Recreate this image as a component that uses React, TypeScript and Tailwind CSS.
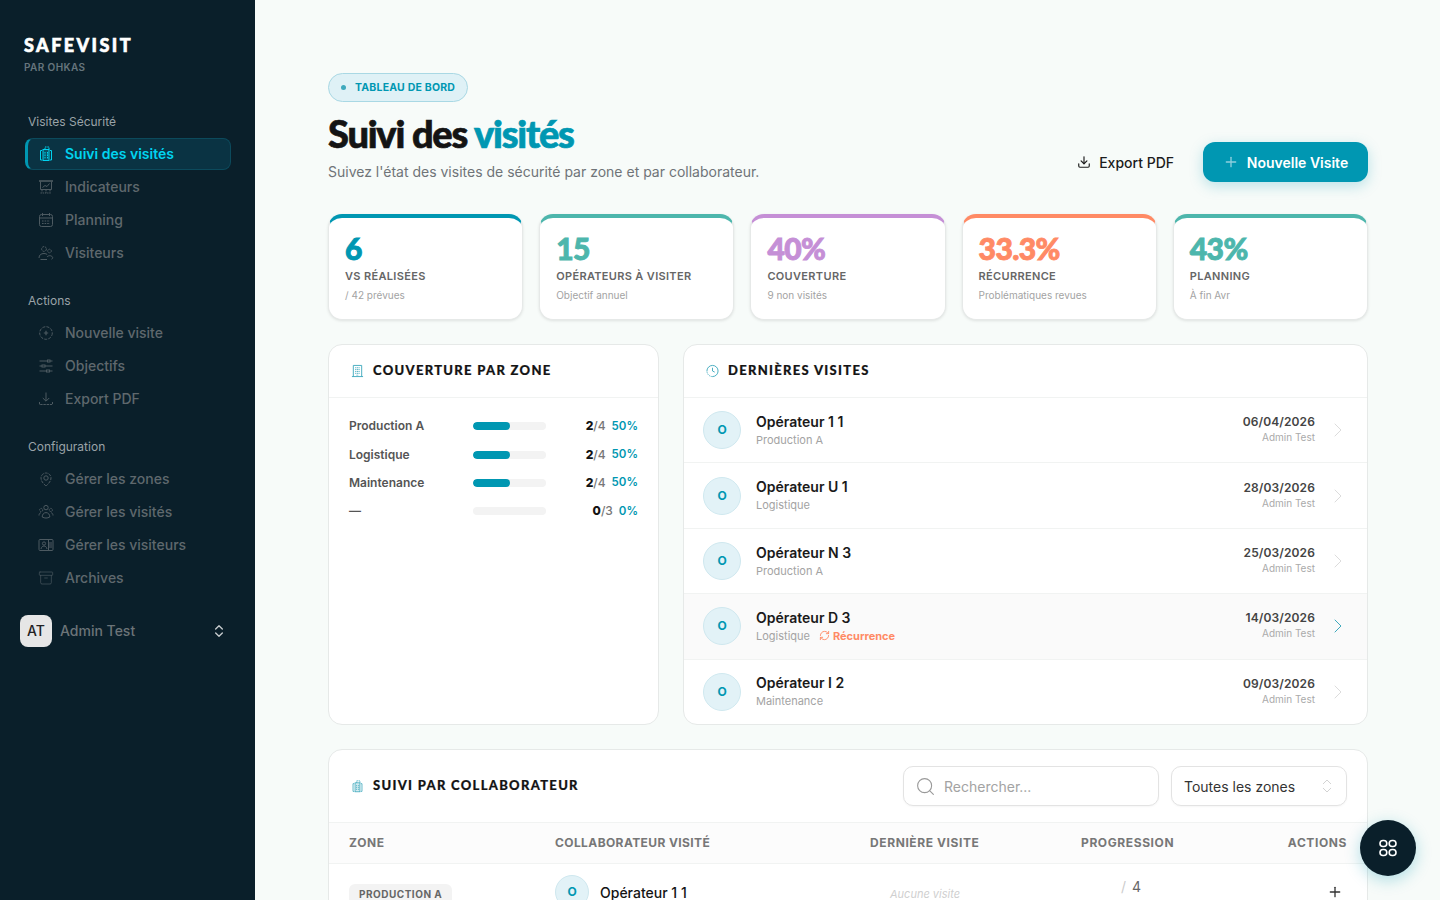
import React from "react";
import {
  Archive,
  ChevronRight,
  ChevronsUpDown,
  Download,
  Plus,
  RefreshCw,
  Search,
} from "lucide-react";

const BODY = "font-['Inter','Liberation_Sans',sans-serif]";
const HEAD = "font-['Lato','Liberation_Sans',sans-serif]";

type IconProps = {className?: string};

const SuiviIcon: React.FC<IconProps> = ({className}) => (
  <svg viewBox="0 0 16 16" fill="none" stroke="currentColor" strokeWidth="1" className={className}>
    <path d="M4 4.5H2.5v9.5H4M12 4.5h1.5V14H12" />
    <rect x="5" y="3.5" width="6" height="11" fill="currentColor" fillOpacity="0.2" />
    <path d="M7 3.5V1h4v2.5M7 6v6.5M9.5 6v6.5" strokeDasharray="1.6 0.8" />
  </svg>
);

const BoardIcon: React.FC<IconProps> = ({className}) => (
  <svg viewBox="0 0 16 16" fill="none" stroke="currentColor" strokeWidth="1" className={className}>
    <path d="M1 2h14" strokeWidth="1.6" />
    <path d="M2.5 2.5v8h11v-8" />
    <path d="M4.5 8.5l2.5-2 2 1 2.5-3" />
    <path d="M4 11v2.5M8 11v3M12 11v2.5M2.5 14h11" strokeDasharray="1.4 0.8" />
  </svg>
);

const CalendarIcon: React.FC<IconProps> = ({className}) => (
  <svg viewBox="0 0 16 16" fill="none" stroke="currentColor" strokeWidth="1" className={className}>
    <rect x="1.5" y="2.5" width="13" height="12" rx="2" />
    <path d="M1.5 6h13M4.5 1v3M11.5 1v3" />
    <path d="M4 9h8M4 11.5h8" strokeDasharray="1.6 1" />
  </svg>
);

const VisitorsIcon: React.FC<IconProps> = ({className}) => (
  <svg viewBox="0 0 16 16" fill="none" stroke="currentColor" strokeWidth="1" className={className}>
    <circle cx="6" cy="4" r="2.4" strokeDasharray="2 0.8" />
    <circle cx="11.5" cy="6" r="1.8" strokeDasharray="1.5 0.7" />
    <path d="M1 13c0-3 2-4.5 5-4.5 1.5 0 2.5.4 3.2 1M9 14.5H2.5M9 12c1-1.5 4-2 5.5 0 .5.8 0 2-1 2.2" />
  </svg>
);

const CirclePlusDashed: React.FC<IconProps> = ({className}) => (
  <svg viewBox="0 0 16 16" fill="none" stroke="currentColor" strokeWidth="1" className={className}>
    <circle cx="8" cy="8" r="6.3" strokeDasharray="3 1.2" />
    <path d="M8 5.8v4.4M5.8 8h4.4" strokeWidth="1.2" />
  </svg>
);

const SliderIcon: React.FC<IconProps> = ({className}) => (
  <svg viewBox="0 0 16 16" fill="none" stroke="currentColor" strokeWidth="1" className={className}>
    <path d="M1.5 3h8M12 3h2.5M1.5 8h2.5M7 8h7.5M1.5 13h7M11.5 13h3" />
    <rect x="9.5" y="2" width="2.5" height="2" />
    <rect x="4" y="7" width="3" height="2" />
    <rect x="8.5" y="12" width="3" height="2" />
  </svg>
);

const ExportIcon: React.FC<IconProps> = ({className}) => (
  <svg viewBox="0 0 16 16" fill="none" stroke="currentColor" strokeWidth="1" className={className}>
    <path d="M8 1.5v8.5M4.8 7L8 10.2 11.2 7" />
    <path d="M1.5 11v2.5h13V11" strokeDasharray="2.4 0.8" />
  </svg>
);

const ZoneIcon: React.FC<IconProps> = ({className}) => (
  <svg viewBox="0 0 16 16" fill="none" stroke="currentColor" strokeWidth="1" className={className}>
    <path d="M8 15c-1-1-5-4-5-8a5 5 0 0 1 10 0c0 4-4 7-5 8Z" strokeDasharray="3 1" />
    <circle cx="8" cy="7" r="2.2" />
  </svg>
);

const GroupIcon: React.FC<IconProps> = ({className}) => (
  <svg viewBox="0 0 16 16" fill="none" stroke="currentColor" strokeWidth="1" className={className}>
    <circle cx="8" cy="3.6" r="2.2" />
    <circle cx="3.2" cy="6" r="1.6" strokeDasharray="1.5 0.6" />
    <circle cx="12.8" cy="6" r="1.6" strokeDasharray="1.5 0.6" />
    <path d="M4.2 13c0-2.6 1.6-4.4 3.8-4.4s3.8 1.8 3.8 4.4c-2.4 1.4-5.2 1.4-7.6 0Z" />
    <path d="M1 11.5c0-1.4.6-2.4 1.8-2.8M15 11.5c0-1.4-.6-2.4-1.8-2.8" />
  </svg>
);

const CardIcon: React.FC<IconProps> = ({className}) => (
  <svg viewBox="0 0 16 16" fill="none" stroke="currentColor" strokeWidth="1" className={className}>
    <rect x="1" y="2.5" width="14" height="11" rx="1" />
    <path d="M10.5 2.5v11" />
    <rect x="11" y="5" width="3" height="6" fill="currentColor" fillOpacity="0.5" stroke="none" />
    <circle cx="6" cy="6.5" r="1.6" />
    <path d="M3 12c.4-2 1.4-3 3-3s2.6 1 3 3" />
  </svg>
);

const BuildingIcon: React.FC<IconProps> = ({className}) => (
  <svg viewBox="0 0 14 14" fill="none" stroke="currentColor" strokeWidth="1" className={className}>
    <path d="M2.5 13V1h9v12M1 13h12" />
    <path d="M4.5 3.5h5M4.5 5.5h5M4.5 7.5h5M4.5 9.5h5M6 11.5h2" strokeDasharray="1.2 0.6" />
  </svg>
);

const ClockIcon: React.FC<IconProps> = ({className}) => (
  <svg viewBox="0 0 14 14" fill="none" stroke="currentColor" strokeWidth="1" className={className}>
    <path d="M1 7a6 6 0 1 1 6 6" />
    <path d="M7 13a6 6 0 0 1-6-6" strokeDasharray="1.4 1" />
    <path d="M7 3.5V7l2.4 1.2" />
  </svg>
);

const GridIcon: React.FC<IconProps> = ({className}) => (
  <svg viewBox="0 0 20 20" fill="none" stroke="currentColor" strokeWidth="1.6" className={className}>
    <rect x="2" y="2.5" width="6.8" height="6" rx="3" />
    <rect x="11.2" y="2.5" width="6.8" height="6" rx="3" />
    <rect x="2" y="11.5" width="6.8" height="6" rx="3" />
    <rect x="11.2" y="11.5" width="6.8" height="6" rx="3" />
  </svg>
);

const NAV = [
  {
    title: "Visites Sécurité",
    items: [
      {label: "Suivi des visités", Icon: SuiviIcon, active: true},
      {label: "Indicateurs", Icon: BoardIcon},
      {label: "Planning", Icon: CalendarIcon},
      {label: "Visiteurs", Icon: VisitorsIcon},
    ],
  },
  {
    title: "Actions",
    items: [
      {label: "Nouvelle visite", Icon: CirclePlusDashed},
      {label: "Objectifs", Icon: SliderIcon},
      {label: "Export PDF", Icon: ExportIcon},
    ],
  },
  {
    title: "Configuration",
    items: [
      {label: "Gérer les zones", Icon: ZoneIcon},
      {label: "Gérer les visités", Icon: GroupIcon},
      {label: "Gérer les visiteurs", Icon: CardIcon},
      {label: "Archives", Icon: Archive},
    ],
  },
];

const STATS = [
  {value: "6", label: "VS réalisées", sub: "/ 42 prévues", border: "border-t-[#0097b2]", text: "text-[#0097b2]"},
  {value: "15", label: "Opérateurs à visiter", sub: "Objectif annuel", border: "border-t-[#4db6ac]", text: "text-[#4db6ac]"},
  {value: "40%", label: "Couverture", sub: "9 non visités", border: "border-t-[#c58fd6]", text: "text-[#c58fd6]"},
  {value: "33.3%", label: "Récurrence", sub: "Problématiques revues", border: "border-t-[#ff8a65]", text: "text-[#ff8a65]"},
  {value: "43%", label: "Planning", sub: "À fin Avr", border: "border-t-[#4db6ac]", text: "text-[#4db6ac]"},
];

const ZONES = [
  {name: "Production A", done: 2, total: 4, pct: 50},
  {name: "Logistique", done: 2, total: 4, pct: 50},
  {name: "Maintenance", done: 2, total: 4, pct: 50},
  {name: "—", done: 0, total: 3, pct: 0},
];

const VISITS = [
  {name: "Opérateur 1 1", zone: "Production A", date: "06/04/2026"},
  {name: "Opérateur U 1", zone: "Logistique", date: "28/03/2026"},
  {name: "Opérateur N 3", zone: "Production A", date: "25/03/2026"},
  {name: "Opérateur D 3", zone: "Logistique", date: "14/03/2026", recurrence: true},
  {name: "Opérateur I 2", zone: "Maintenance", date: "09/03/2026"},
];

const Sidebar: React.FC = () => (
  <aside className="w-[255px] shrink-0 h-full bg-[#0a1f2a] pl-[25px] pr-6 flex flex-col">
    <div className={`${HEAD} -ml-px mt-[35px] text-[18px] leading-[20px] font-black tracking-[0.135em] text-white [-webkit-text-stroke:0.6px_white]`}>
      SAFEVISIT
    </div>
    <div className="-ml-px mt-[5px] text-[10px] leading-[14px] font-semibold tracking-[0.04em] text-[#66757d]">
      PAR OHKAS
    </div>
    <nav className="mt-[39.5px] flex flex-col gap-6">
      {NAV.map((group) => (
        <div key={group.title}>
          <div className="pl-[3px] mb-2 text-[12px] leading-[16px] text-[#9aa3a8]">{group.title}</div>
          <div className="flex flex-col gap-px">
            {group.items.map(({label, Icon, active}: {label: string; Icon: React.FC<IconProps>; active?: boolean}) => (
              <div
                key={label}
                className={
                  active
                    ? "h-8 flex items-center gap-[11px] pl-[10px] rounded-lg border border-[#0c4a5c] border-l-[3px] border-l-[#0097b2] bg-[#0a3343] text-[#00d4f0] text-[14px] font-semibold"
                    : "h-8 flex items-center gap-[11px] pl-[13px] text-[#5f686d] text-[14px] font-medium"
                }
              >
                <Icon className={active ? "w-4 h-4 shrink-0" : "w-4 h-4 shrink-0 text-[#4d5a61] stroke-1"} />
                {label}
              </div>
            ))}
          </div>
        </div>
      ))}
    </nav>
    <div className="-ml-[5px] mt-[21px] flex items-center gap-2 pr-1">
      <div className="w-8 h-8 rounded-lg bg-[#e6e6e6] flex items-center justify-center text-[14px] font-medium text-[#222]">
        AT
      </div>
      <span className="flex-1 text-[14px] font-medium text-[#6c7478]">Admin Test</span>
      <ChevronsUpDown className="w-4 h-4 text-[#c9cdcf]" />
    </div>
  </aside>
);

const PanelTitle: React.FC<{icon: React.ReactNode; children: React.ReactNode}> = ({icon, children}) => (
  <div className="flex items-center gap-[9px]">
    <span className="w-[13px] h-[13px] text-[#3fa9bd] flex items-center justify-center">{icon}</span>
    <h2 className={`${HEAD} -mt-[2px] text-[13px] leading-[18px] font-black tracking-[0.1em] uppercase text-[#141414] [-webkit-text-stroke:0.2px_#141414]`}>
      {children}
    </h2>
  </div>
);

const Avatar: React.FC<{size: string}> = ({size}) => (
  <div
    className={`${size} shrink-0 rounded-full bg-[#e2f2f7] border border-[#cfe8ef] flex items-center justify-center text-[#0097b2] text-[12px] font-bold`}
  >
    O
  </div>
);

export default function App() {
  return (
    <div className={`${BODY} relative flex w-full h-screen overflow-hidden bg-[#f7fbf9]`}>
      <Sidebar />

      <main className="flex-1 min-w-0 h-full overflow-hidden pl-[73px] pr-[72px] pt-[73px]">
        {/* Header */}
        <div className="flex items-end justify-between">
          <div>
            <div className="flex w-fit h-[29px] items-center gap-[9px] rounded-full border border-[#a9d8e4] bg-[#dff1f6] px-3 text-[10.5px] font-bold tracking-[0.02em] text-[#0097b2]">
              <span className="w-[5px] h-[5px] rounded-full bg-[#3fa9bd]" />
              TABLEAU DE BORD
            </div>
            <h1 className={`${HEAD} mt-[9px] text-[38px] leading-[44px] font-black tracking-[-0.032em] text-[#141414] [-webkit-text-stroke:0.7px_#141414]`}>
              Suivi des <span className="text-[#0097b2] [-webkit-text-stroke:0.7px_#0097b2]">visités</span>
            </h1>
            <p className="mt-[7px] text-[14px] leading-[20px] text-[#6f7478]">
              Suivez l'état des visites de sécurité par zone et par collaborateur.
            </p>
          </div>
          <div className="flex items-center gap-[29px]">
            <div className="flex items-center gap-2 text-[14px] font-medium text-[#1c1c1c]">
              <Download className="w-[14px] h-[14px]" />
              Export PDF
            </div>
            <div className="h-10 w-[165px] flex items-center justify-center gap-2 rounded-xl bg-[#0097b2] text-[14px] font-semibold text-white shadow-[0_4px_14px_rgba(0,151,178,0.25)]">
              <Plus className="w-4 h-4 text-[#8fd0de]" />
              Nouvelle Visite
            </div>
          </div>
        </div>

        {/* Stats */}
        <div className="mt-[32px] grid grid-cols-5 gap-4">
          {STATS.map((s) => (
            <div
              key={s.label}
              className={`h-[106px] rounded-[14px] border border-[#e6e9e8] border-t-4 ${s.border} bg-white px-4 pt-[14px] shadow-[0_1px_3px_rgba(0,0,0,0.1)]`}
            >
              <div className={`${HEAD} ${s.text} text-[30px] leading-[32px] font-black tracking-[-0.02em] [-webkit-text-stroke:0.9px]`}>{s.value}</div>
              <div className="mt-[4px] text-[11px] leading-[16px] font-semibold uppercase tracking-[0.03em] text-[#666]">
                {s.label}
              </div>
              <div className="mt-[4px] text-[10px] leading-[14px] text-[#a3a3a3]">{s.sub}</div>
            </div>
          ))}
        </div>

        {/* Zones + recent visits */}
        <div className="mt-6 grid grid-cols-[331px_1fr] gap-6 h-[381px]">
          <section className="rounded-[14px] border border-[#e6e9e8] bg-white overflow-hidden">
            <div className="h-[53px] px-[22px] flex items-center border-b border-[#f1f3f2]">
              <PanelTitle icon={<BuildingIcon className="w-[14px] h-[14px]" />}>Couverture par zone</PanelTitle>
            </div>
            <div className="px-5 pt-[14px]">
              {ZONES.map((z) => (
                <div key={z.name} className="h-[28.4px] flex items-center text-[12px]">
                  <span className="w-[124px] font-semibold text-[#555]">{z.name}</span>
                  <div className="w-[73px] h-2 rounded-full bg-[#f3f3f3] overflow-hidden">
                    <div className="h-full rounded-full bg-[#0097b2]" style={{width: `${z.pct}%`}} />
                  </div>
                  <span className="flex-1 text-right text-[12px] font-medium text-[#777]">
                    <b className="font-extrabold text-[#141414]">{z.done}</b>/{z.total}
                  </span>
                  <span className="ml-[6px] text-[11.5px] font-semibold text-[#0097b2]">{z.pct}%</span>
                </div>
              ))}
            </div>
          </section>

          <section className="rounded-[14px] border border-[#e6e9e8] bg-white overflow-hidden flex flex-col">
            <div className="h-[53px] shrink-0 px-[22px] flex items-center border-b border-[#f1f3f2]">
              <PanelTitle icon={<ClockIcon className="w-[14px] h-[14px]" />}>Dernières visites</PanelTitle>
            </div>
            <div className="flex-1 flex flex-col divide-y divide-[#f1f3f2]">
              {VISITS.map((v) => (
                <div
                  key={v.name}
                  className={`flex-1 flex items-center pl-[19px] pr-[17px] ${v.recurrence ? "bg-[#fafafa]" : ""}`}
                >
                  <Avatar size="w-[38px] h-[38px]" />
                  <div className="ml-[15px] flex-1">
                    <div className="text-[14px] leading-[18px] font-semibold text-[#1a1a1a]">{v.name}</div>
                    <div className="mt-px flex items-center text-[11px] leading-[16px] text-[#a3a3a3]">
                      {v.zone}
                      {v.recurrence && (
                        <span className="ml-[9px] flex items-center gap-[3px] font-bold text-[#ff8a65]">
                          <RefreshCw className="w-[11px] h-[11px]" />
                          Récurrence
                        </span>
                      )}
                    </div>
                  </div>
                  <div className="-mt-[2px] text-right">
                    <div className="text-[12px] leading-[16px] font-semibold tracking-[0.01em] text-[#444]">{v.date}</div>
                    <div className="text-[10px] leading-[14px] text-[#aaa]">Admin Test</div>
                  </div>
                  <ChevronRight
                    className={`ml-[11px] w-6 h-6 stroke-1 ${v.recurrence ? "text-[#3fa9bd]" : "text-[#dcdcdc]"}`}
                  />
                </div>
              ))}
            </div>
          </section>
        </div>

        {/* Collaborator table */}
        <section className="mt-6 rounded-[14px] border border-[#e6e9e8] bg-white overflow-hidden">
          <div className="h-[73px] px-5 flex items-center justify-between border-b border-[#f1f3f2]">
            <div className="ml-[2px]">
              <PanelTitle icon={<SuiviIcon className="w-[15px] h-[15px]" />}>Suivi par collaborateur</PanelTitle>
            </div>
            <div className="flex items-center gap-3">
              <div className="w-[256px] h-10 rounded-[10px] border border-[#e3e3e3] bg-white px-[11px] flex items-center gap-2 text-[14px] text-[#a3a3a3] shadow-[0_1px_2px_rgba(0,0,0,0.04)]">
                <Search className="w-[21px] h-[21px] stroke-[1.25] text-[#999]" />
                Rechercher...
              </div>
              <div className="w-[176px] h-10 rounded-[10px] border border-[#e3e3e3] bg-white pl-3 pr-[10px] flex items-center justify-between text-[14px] text-[#333] shadow-[0_1px_2px_rgba(0,0,0,0.04)]">
                Toutes les zones
                <ChevronsUpDown className="w-[18px] h-[18px] stroke-1 text-[#c4c4c4]" />
              </div>
            </div>
          </div>
          <div className="h-[41px] px-5 grid grid-cols-[206px_315px_211px_1fr] items-center bg-[#fcfcfc] border-b border-[#f1f3f2] text-[12px] font-bold tracking-[0.05em] text-[#777]">
            <span>ZONE</span>
            <span className="tracking-[0.033em]">COLLABORATEUR VISITÉ</span>
            <span>DERNIÈRE VISITE</span>
            <div className="flex justify-between">
              <span>PROGRESSION</span>
              <span>ACTIONS</span>
            </div>
          </div>
          <div className="h-[80px] px-5 pt-[11px] grid grid-cols-[206px_315px_211px_1fr] items-start">
            <span className="mt-[9px] w-fit rounded-md bg-[#f3f3f3] px-[10px] py-[3px] text-[10px] font-bold tracking-[0.05em] text-[#666]">
              PRODUCTION A
            </span>
            <div className="flex items-center gap-[11px]">
              <Avatar size="w-[34px] h-[34px]" />
              <span className="text-[14px] font-medium text-[#141414]">Opérateur 1 1</span>
            </div>
            <span className="mt-[11px] pl-5 text-[11px] italic text-[#cfcfcf]">Aucune visite</span>
            <div className="flex justify-between">
              <span className="mt-px pl-10 text-[14px] leading-[22px] text-[#666]">
                <span className="mr-[2px] text-[#ccc]">/</span> 4
              </span>
              <Plus className="mt-[9px] mr-[4px] w-4 h-4 text-[#333]" />
            </div>
          </div>
        </section>
      </main>

      {/* Floating shortcut button */}
      <div className="absolute right-6 bottom-6 w-14 h-14 rounded-full bg-[#0a1f2a] flex items-center justify-center text-white shadow-[0_4px_16px_rgba(0,151,178,0.3)]">
        <GridIcon className="w-5 h-5" />
      </div>
    </div>
  );
}
